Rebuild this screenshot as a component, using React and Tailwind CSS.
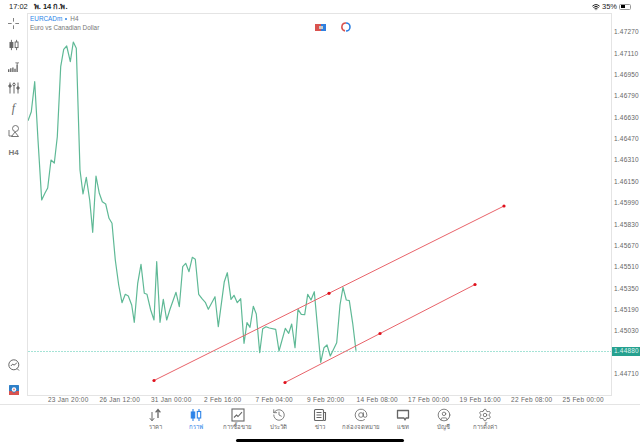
import React from 'react';
import { AtSign, CircleUser, History, Settings, Wifi } from 'lucide-react';

// price series, in page coordinates
const SERIES = [
  [28, 120.7], [31.3, 111.7], [34.7, 81.7], [38, 140], [41.7, 200], [45, 193], [47.7, 188], [51, 160], [54.3, 163],
  [57.3, 136.7], [60.7, 66.7], [63.7, 49.3], [66.7, 46], [70.3, 61.7], [73.3, 42], [76.3, 48.3], [80, 170], [83, 194],
  [86.3, 177.3], [89.7, 200], [92.7, 232.3], [96, 176], [99.3, 193.3], [102.3, 201.7], [105.7, 204], [109, 218.3],
  [112, 223.3], [115.3, 260], [118.7, 285], [122, 302.7], [125.3, 294.3], [128.3, 296], [131.7, 305], [134.3, 322.3],
  [137.7, 283.3], [141, 264.3], [144.3, 293.3], [147, 294.3], [150.7, 310], [154, 320], [156.7, 261.7], [160, 322.3],
  [163.3, 299.3], [166.7, 320], [170, 309.3], [176, 292.3], [179.3, 306.7], [182.7, 266.7], [185.7, 263.3], [189, 271.7],
  [192.3, 257.3], [195.3, 259.3], [198.7, 294.3], [202, 298.7], [205.3, 302.3], [208.3, 309.3], [215, 296.7],
  [218.3, 326.7], [224.3, 281.7], [227.3, 272.7], [231, 299.3], [234, 295.3], [237.3, 302.7], [240.7, 298.7],
  [244, 343.3], [247, 322.7], [250, 327.3], [253.3, 306.3], [256.3, 314], [259.7, 352.7], [262.7, 328.7], [266, 326.7],
  [269.3, 328], [275.7, 329.3], [279, 351], [285.3, 328.3], [288.7, 333.3], [291.7, 324], [295, 347.7], [298, 309.3],
  [301.3, 314.3], [304.7, 314.7], [307.7, 294.3], [311, 300], [314.3, 291.7], [320.7, 362.3], [324, 347.7], [327, 345],
  [330.3, 356], [336.7, 342.7], [340, 305], [343, 287.3], [346.3, 300], [349.3, 300.7], [352.7, 323.3], [356, 350.7],
];

const PRICES = ['1.47270', '1.47110', '1.46950', '1.46790', '1.46630', '1.46470', '1.46310', '1.46150', '1.45990', '1.45830', '1.45670', '1.45510', '1.45350', '1.45190', '1.45030'];

const DATES = ['23 Jan 20:00', '26 Jan 12:00', '31 Jan 00:00', '2 Feb 16:00', '7 Feb 04:00', '9 Feb 20:00', '14 Feb 08:00', '17 Feb 00:00', '19 Feb 16:00', '22 Feb 08:00', '25 Feb 00:00'];

function Candles({ className, color = 'currentColor' }) {
  return (
    <svg viewBox="0 0 14 14" className={className} fill="none" stroke={color} strokeWidth="1.1">
      <path d="M4 1v12M10 1v12" />
      <rect x="2.3" y="4" width="3.4" height="6" fill={color} />
      <rect x="8.3" y="3.5" width="3.4" height="6.5" fill="#fff" />
    </svg>
  );
}

function ArrowsIcon({ className }) {
  return (
    <svg viewBox="0 0 14 14" className={className} fill="none" stroke="currentColor" strokeWidth="1">
      <path d="M4 4v8.5M1.8 10.2L4 12.8l2.2-2.6" />
      <path d="M10 10V1.8M7.6 4.3L10 1.5l2.4 2.8" strokeWidth="1.3" />
    </svg>
  );
}

function TradeIcon({ className }) {
  return (
    <svg viewBox="0 0 14 14" className={className} fill="none" stroke="currentColor" strokeWidth="1.1">
      <rect x="1" y="1" width="12" height="12" />
      <path d="M3 9.5l2.5-2.5 1.5 1.5L11 4.2" />
    </svg>
  );
}

function NewsIcon({ className }) {
  return (
    <svg viewBox="0 0 14 14" className={className} fill="none" stroke="currentColor" strokeWidth="1.1">
      <rect x="1.5" y="1.5" width="9" height="11" rx="1" />
      <path d="M3.5 4.5h5M3.5 7h5M3.5 9.5h5M10.5 4.5h2v7a1 1 0 0 1-1 1h-1" />
    </svg>
  );
}

function ChatIcon({ className }) {
  return (
    <svg viewBox="0 0 14 14" className={className} fill="none" stroke="currentColor" strokeWidth="1.3">
      <path d="M1.5 2.5h11v7.5h-2.5l-1 2-1-2h-6.5z" strokeLinejoin="round" />
    </svg>
  );
}

const TABS = [
  { label: 'ราคา', Icon: ArrowsIcon },
  { label: 'กราฟ', Icon: Candles, active: true },
  { label: 'การซื้อขาย', Icon: TradeIcon },
  { label: 'ประวัติ', Icon: History },
  { label: 'ข่าว', Icon: NewsIcon },
  { label: 'กล่องจดหมาย', Icon: AtSign },
  { label: 'แชท', Icon: ChatIcon },
  { label: 'บัญชี', Icon: CircleUser },
  { label: 'การตั้งค่า', Icon: Settings },
];

function SideToolbar() {
  return (
    <div className="w-[27px] shrink-0 flex flex-col items-center text-[#666]">
      <div className="h-[21.5px] flex items-center justify-center">
        <svg viewBox="0 0 12 12" className="w-[11px] h-[11px]" fill="none" stroke="currentColor" strokeWidth="0.9">
          <path d="M6 0v4M6 8v4M0 6h4M8 6h4" />
        </svg>
      </div>
      <div className="h-[21.5px] flex items-center justify-center">
        <Candles className="w-[12px] h-[12px]" />
      </div>
      <div className="h-[21.5px] flex items-center justify-center">
        <svg viewBox="0 0 12 12" className="w-[11px] h-[11px]" fill="currentColor">
          <path d="M0 9h1.5v3H0zM2.3 8h1.5v4H2.3zM4.6 7h1.5v5H4.6zM6.9 8.5h1.5V12H6.9zM9.2 4h1.5v8H9.2z" />
          <path d="M8 1.5h4v1h-1.5V4h-1V2.5H8z" />
        </svg>
      </div>
      <div className="h-[21.5px] flex items-center justify-center">
        <svg viewBox="0 0 12 12" className="w-[12px] h-[12px]" fill="none" stroke="currentColor" strokeWidth="1">
          <path d="M2 0.5v11M6 0.5v11M10 0.5v11" />
          <circle cx="2" cy="4" r="1.2" fill="currentColor" />
          <circle cx="6" cy="2.5" r="1.2" fill="#fff" />
          <circle cx="10" cy="6" r="1.2" fill="currentColor" />
        </svg>
      </div>
      <div className="h-[21.5px] flex items-start justify-center text-[12px] italic leading-[18px] font-['Liberation_Serif',serif]">f</div>
      <div className="h-[21.5px] flex items-center justify-center">
        <svg viewBox="0 0 12 12" className="w-[12px] h-[12px]" fill="none" stroke="currentColor" strokeWidth="0.9">
          <circle cx="7.5" cy="3.5" r="3" />
          <path d="M1 5v6h3.5" />
          <path d="M7 7l3.5 4.5h-7z" />
        </svg>
      </div>
      <div className="h-[21.5px] flex items-center justify-center text-[8px] font-bold leading-none text-[#777] font-['Liberation_Sans',sans-serif]">H4</div>
      <div className="flex-1" />
      <div className="mb-[14px]">
        <svg viewBox="0 0 12 12" className="w-[12px] h-[12px] block" fill="none" stroke="currentColor" strokeWidth="1">
          <circle cx="5.8" cy="5.8" r="5" />
          <path d="M2.8 7l2-2 1.2 1.2L8.8 4M9 9.5l2 2" />
        </svg>
      </div>
      <div className="mb-[1px]">
        <svg viewBox="0 0 10 10" className="w-[10px] h-[10px] block">
          <rect width="10" height="10" rx="0.5" fill="#2f80c8" />
          <path d="M0 6h2.5L5 8l2.5-2H10v4H0z" fill="#d9534f" />
          <circle cx="5" cy="4.5" r="2.2" fill="#fff" />
          <circle cx="5" cy="4.5" r="1" fill="#e28b86" />
        </svg>
      </div>
    </div>
  );
}

function Chart() {
  return (
    <div className="relative flex-1 border border-[#e4e4e4]">
      <svg viewBox="28 14 583 381" className="w-full h-full block" fill="none">
        <line x1="28" y1="351.5" x2="611" y2="351.5" stroke="#a5e3d6" strokeWidth="1" strokeDasharray="2 1" />
        <polyline points={SERIES.map((p) => p.join(',')).join(' ')} stroke="#5fb996" strokeWidth="1.2" strokeLinejoin="round" />
        <g stroke="#e8636a" strokeWidth="1">
          <line x1="154" y1="380.5" x2="504" y2="206" />
          <line x1="285" y1="382.5" x2="475" y2="284.5" />
        </g>
        <g fill="#e0101c">
          <circle cx="154" cy="380.5" r="1.6" />
          <circle cx="329" cy="293.3" r="1.6" />
          <circle cx="504" cy="206" r="1.6" />
          <circle cx="285" cy="382.5" r="1.6" />
          <circle cx="380" cy="333.5" r="1.6" />
          <circle cx="475" cy="284.5" r="1.6" />
        </g>
      </svg>

      {/* symbol title */}
      <div className="absolute left-[2px] top-[1px] text-[6.4px] leading-[8.5px] font-['Liberation_Sans',sans-serif]">
        <div className="flex items-center gap-[2px] text-[#777]">
          <span className="text-[#2d84e8]">EURCADm</span>
          <span className="w-[2px] h-[2px] mx-[1px] rounded-full bg-[#2d84e8]" />
          <span>H4</span>
        </div>
        <div className="text-[#777]">Euro vs Canadian Dollar</div>
      </div>

      {/* top centre badges */}
      <div className="absolute left-[287px] top-[8px] flex items-center gap-[15px]">
        <div className="relative w-[11px] h-[7px] flex">
          <div className="w-1/2 bg-[#d9534f]" />
          <div className="w-1/2 bg-[#2f80e0]" />
          <div className="absolute left-[3.5px] top-[2px] w-[4px] h-[3px] bg-[#ccc]" />
        </div>
        <svg viewBox="0 0 10 10" className="w-[10px] h-[10px]" fill="none" strokeWidth="1.6">
          <path d="M5 1a4 4 0 0 0-1 7.9" stroke="#d9534f" />
          <path d="M5 1a4 4 0 0 1 0 8" stroke="#2f80e0" />
        </svg>
      </div>
    </div>
  );
}

export default function App() {
  return (
    <div className="w-[640px] h-[447px] bg-white flex flex-col overflow-hidden font-['Liberation_Sans','Noto_Sans',sans-serif]">
      {/* status bar */}
      <div className="h-[13px] shrink-0 flex items-center justify-between px-[9px] text-[7.5px] text-[#222]">
        <div className="flex gap-[6px]">
          <span>17:02</span>
          <span className="font-bold">พ. 14 ก.พ.</span>
        </div>
        <div className="flex items-center gap-[2px]">
          <Wifi size={8} strokeWidth={3} />
          <span>35%</span>
          <div className="w-[12px] h-[6px] rounded-[1.5px] border border-[#999] p-[0.5px]">
            <div className="w-[4px] h-full bg-black" />
          </div>
        </div>
      </div>

      {/* chart row */}
      <div className="h-[383px] shrink-0 flex">
        <SideToolbar />
        <Chart />
        <div className="relative w-[28px] shrink-0 pt-[8.5px] text-[6.5px] tracking-[0.2px] text-[#666]">
          {PRICES.map((p) => (
            <div key={p} className="h-[21.36px] flex items-center pl-[2px]">{p}</div>
          ))}
          <div className="h-[21.36px]" />
          <div className="h-[21.36px] flex items-center pl-[2px]">1.44710</div>
          <div className="absolute left-0 right-0 top-[333.5px] h-[9px] flex items-center pl-[2px] bg-[#26a18f] text-[#dff3ef]">1.44880</div>
        </div>
      </div>

      {/* time axis */}
      <div className="h-[9px] shrink-0 flex pl-[42.5px] border-b border-[#e4e4e4]">
        {DATES.map((d) => (
          <div key={d} className="w-[51.5px] shrink-0 text-center text-[6.5px] leading-[7px] tracking-[0.25px] text-[#666] whitespace-nowrap">{d}</div>
        ))}
      </div>

      {/* bottom tabs */}
      <div className="flex justify-center pt-[3px]">
        {TABS.map(({ label, Icon, active }) => (
          <div key={label} className={`w-[41.25px] flex flex-col items-center ${active ? 'text-[#2d84e8]' : 'text-[#666]'}`}>
            {active ? <Candles className="w-[14px] h-[14px]" /> : <Icon className="w-[14px] h-[14px]" strokeWidth={1.4} />}
            <span className="mt-[1px] text-[6px] leading-[9px] whitespace-nowrap font-['Noto_Sans','Liberation_Sans',sans-serif]">{label}</span>
          </div>
        ))}
      </div>

      {/* home indicator */}
      <div className="flex justify-center mt-[7px]">
        <div className="w-[168px] h-[3px] rounded-full bg-black" />
      </div>
    </div>
  );
}
